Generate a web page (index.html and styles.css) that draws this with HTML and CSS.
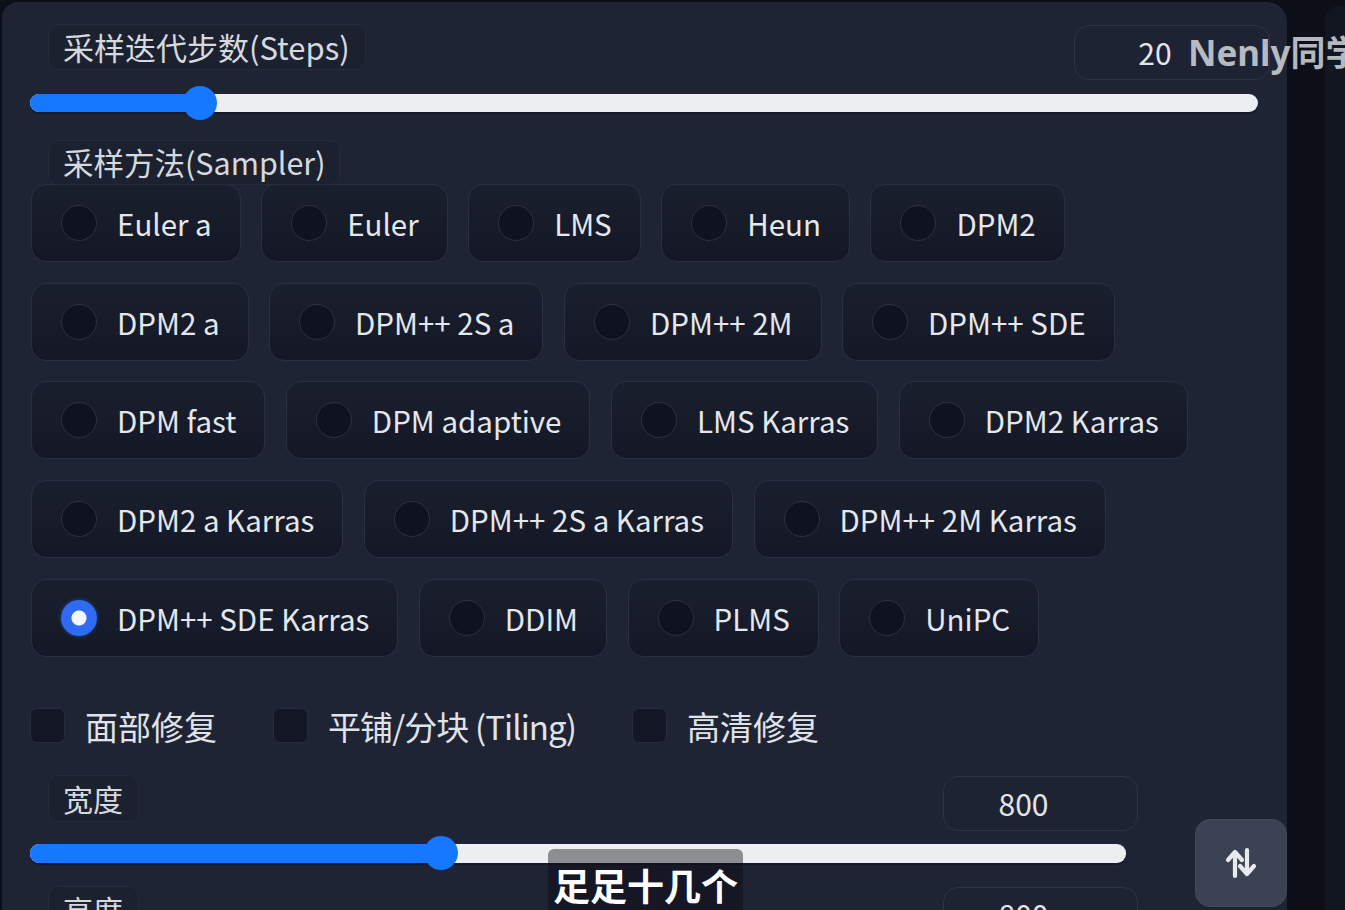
FILE: index.html
```html
<!DOCTYPE html>
<html lang="zh">
<head>
<meta charset="utf-8">
<title>Sampler settings</title>
<link rel="stylesheet" href="styles.css">
</head>
<body>
<div class="page">
  <section class="panel">
    <div class="field">
      <div class="field-head">
        <span class="label">采样迭代步数(Steps)</span>
        <div class="num">20</div>
      </div>
      <div class="slider"><div class="fill" style="width:170px"></div></div>
    </div>

    <div class="sampler">
      <span class="label">采样方法(Sampler)</span>
      <div class="radios">
        <div class="radio-row">
          <label class="radio"><span class="dot"></span>Euler a</label>
          <label class="radio"><span class="dot"></span>Euler</label>
          <label class="radio"><span class="dot"></span>LMS</label>
          <label class="radio"><span class="dot"></span>Heun</label>
          <label class="radio"><span class="dot"></span>DPM2</label>
        </div>
        <div class="radio-row">
          <label class="radio"><span class="dot"></span>DPM2 a</label>
          <label class="radio"><span class="dot"></span>DPM++ 2S a</label>
          <label class="radio"><span class="dot"></span>DPM++ 2M</label>
          <label class="radio"><span class="dot"></span>DPM++ SDE</label>
        </div>
        <div class="radio-row">
          <label class="radio"><span class="dot"></span>DPM fast</label>
          <label class="radio"><span class="dot"></span>DPM adaptive</label>
          <label class="radio"><span class="dot"></span>LMS Karras</label>
          <label class="radio"><span class="dot"></span>DPM2 Karras</label>
        </div>
        <div class="radio-row">
          <label class="radio"><span class="dot"></span>DPM2 a Karras</label>
          <label class="radio"><span class="dot"></span>DPM++ 2S a Karras</label>
          <label class="radio"><span class="dot"></span>DPM++ 2M Karras</label>
        </div>
        <div class="radio-row">
          <label class="radio"><span class="dot checked"></span>DPM++ SDE Karras</label>
          <label class="radio"><span class="dot"></span>DDIM</label>
          <label class="radio"><span class="dot"></span>PLMS</label>
          <label class="radio"><span class="dot"></span>UniPC</label>
        </div>
      </div>
    </div>

    <div class="checks">
      <label class="check"><span class="box"></span>面部修复</label>
      <label class="check check-tight"><span class="box"></span>平铺/分块 (Tiling)</label>
      <label class="check"><span class="box"></span>高清修复</label>
    </div>

    <div class="size">
      <div class="size-fields">
        <div class="field">
          <div class="field-head">
            <span class="label">宽度</span>
            <div class="num">800</div>
          </div>
          <div class="slider"><div class="fill" style="width:411px"></div></div>
        </div>
        <div class="field field-next">
          <div class="field-head">
            <span class="label">高度</span>
            <div class="num">800</div>
          </div>
          <div class="slider"><div class="fill" style="width:411px"></div></div>
        </div>
      </div>
      <button class="swap" type="button" aria-label="swap">
        <svg width="34" height="34" viewBox="0 0 34 34">
          <path d="M11 30 V8 M4 14 L11 6 L18 14" fill="none" stroke="#e8eaee" stroke-width="4.2" stroke-linecap="round" stroke-linejoin="round"/>
          <path d="M23 4 V26 M16 20 L23 28 L30 20" fill="none" stroke="#e8eaee" stroke-width="4.2" stroke-linecap="round" stroke-linejoin="round"/>
        </svg>
      </button>
    </div>
  </section>
  <section class="side"></section>
</div>
<div class="watermark">Nenly同学</div>
<div class="subtitle">足足十几个</div>
</body>
</html>
```
FILE: styles.css
```css
* { box-sizing: border-box; }
html, body { margin: 0; padding: 0; }
body {
  background: #0c0f17;
  width: 1345px;
  height: 910px;
  overflow: hidden;
  position: relative;
  font-family: "Noto Sans CJK SC", "Noto Sans", sans-serif;
  color: #e3e6ea;
}
.page {
  display: flex;
  gap: 38px;
  padding-top: 2px;
  padding-left: 2px;
  height: 910px;
  overflow: hidden;
}
.panel {
  width: 1285px;
  flex: none;
  background: #1f2435;
  border-radius: 16px 20px 0 0;
  padding: 22px 17px 0 28px;
  overflow: hidden;
}
.side {
  flex: 1;
  margin-top: 4px;
  background: #121620;
  border-radius: 14px 0 0 0;
}
.field-head {
  display: flex;
  justify-content: space-between;
  align-items: flex-start;
}
.label {
  display: inline-block;
  margin-left: 18px;
  padding: 0 15px 0 14px;
  height: 46px;
  line-height: 44px;
  font-size: 31px;
  color: #d6d9de;
  background: #1c2130;
  border: 1px solid #262b3b;
  border-radius: 10px;
}
.num {
  margin-top: 1px;
  width: 196px;
  height: 55px;
  line-height: 53px;
  text-align: center;
  padding-right: 34px;
  font-size: 30px;
  color: #e2e5e9;
  border: 1px solid #2d3344;
  border-radius: 15px;
  background: #1e2334;
}
.slider {
  margin-top: 14px;
  margin-right: 12px;
  height: 18px;
  border-radius: 9px;
  background: #eceef1;
  box-shadow: 0 2px 0 #171a28;
}
.fill {
  position: relative;
  height: 18px;
  border-radius: 9px;
  background: #1677ff;
}
.fill::after {
  content: "";
  position: absolute;
  right: -17px;
  top: -8px;
  width: 34px;
  height: 34px;
  border-radius: 50%;
  background: #1677ff;
}
.sampler { margin-top: 28px; }
.sampler .label {
  height: 45px;
  line-height: 43px;
  margin-bottom: -1px;
  position: relative;
  font-size: 30.5px;
  padding-right: 13px;
}
.radios {
  display: flex;
  flex-direction: column;
  gap: 20.7px;
  padding-left: 1px;
}
.radio-row {
  display: flex;
  gap: 20.5px;
}
.radio {
  display: flex;
  align-items: center;
  gap: 20px;
  height: 78px;
  padding: 0 28px 0 29px;
  font-size: 29.5px;
  color: #e4e7eb;
  background: linear-gradient(180deg, #1a1f2e 0%, #141826 100%);
  border: 1px solid #2a3041;
  border-radius: 15px;
}
.dot {
  width: 36px;
  height: 36px;
  flex: none;
  border-radius: 50%;
  background: #0f1320;
  border: 1px solid #2c3244;
}
.dot.checked {
  border: none;
  background: radial-gradient(circle, #f4f7ff 0 7px, #2f6bf2 8px);
  box-shadow: 0 0 4px rgba(47, 107, 242, 0.5);
}
.checks {
  display: flex;
  align-items: center;
  gap: 56px;
  margin-top: 47px;
  padding-left: 0;
  height: 44px;
}
.check {
  display: flex;
  align-items: center;
  gap: 20px;
  font-size: 33px;
  color: #e0e3e7;
}
.check-tight { letter-spacing: -0.9px; }
.box {
  width: 35px;
  height: 35px;
  flex: none;
  border-radius: 7px;
  background: #121625;
  border: 1px solid #262c3c;
}
.size {
  display: flex;
  margin-top: 27px;
}
.size-fields {
  width: 1108px;
  flex: none;
}
.size .label { height: 47px; line-height: 45px; font-size: 30px; }
.size .slider { margin-top: 13px; height: 19px; }
.size .fill { height: 19px; }
.size .num { width: 195px; }
.field-next { margin-top: 23px; }
.swap {
  margin-left: auto;
  margin-right: -17px;
  margin-top: 44px;
  width: 92px;
  height: 88px;
  border: 1px solid #414959;
  border-radius: 15px;
  background: #3a4253;
  display: flex;
  align-items: center;
  justify-content: center;
  padding: 0;
}
.watermark {
  position: absolute;
  left: 1188px;
  top: 28px;
  font-family: "Noto Sans", "Noto Sans CJK SC", sans-serif;
  font-weight: 700;
  font-size: 35px;
  line-height: 50px;
  color: rgba(205, 208, 214, 0.88);
  white-space: nowrap;
}
.subtitle {
  position: absolute;
  left: 548px;
  top: 849px;
  width: 195px;
  height: 70px;
  padding-top: 8px;
  text-align: center;
  background: rgba(8, 10, 14, 0.42);
  border-radius: 6px 6px 0 0;
  font-family: "Noto Sans CJK SC", sans-serif;
  font-weight: 700;
  font-size: 37px;
  line-height: 56px;
  color: #ffffff;
}
```
